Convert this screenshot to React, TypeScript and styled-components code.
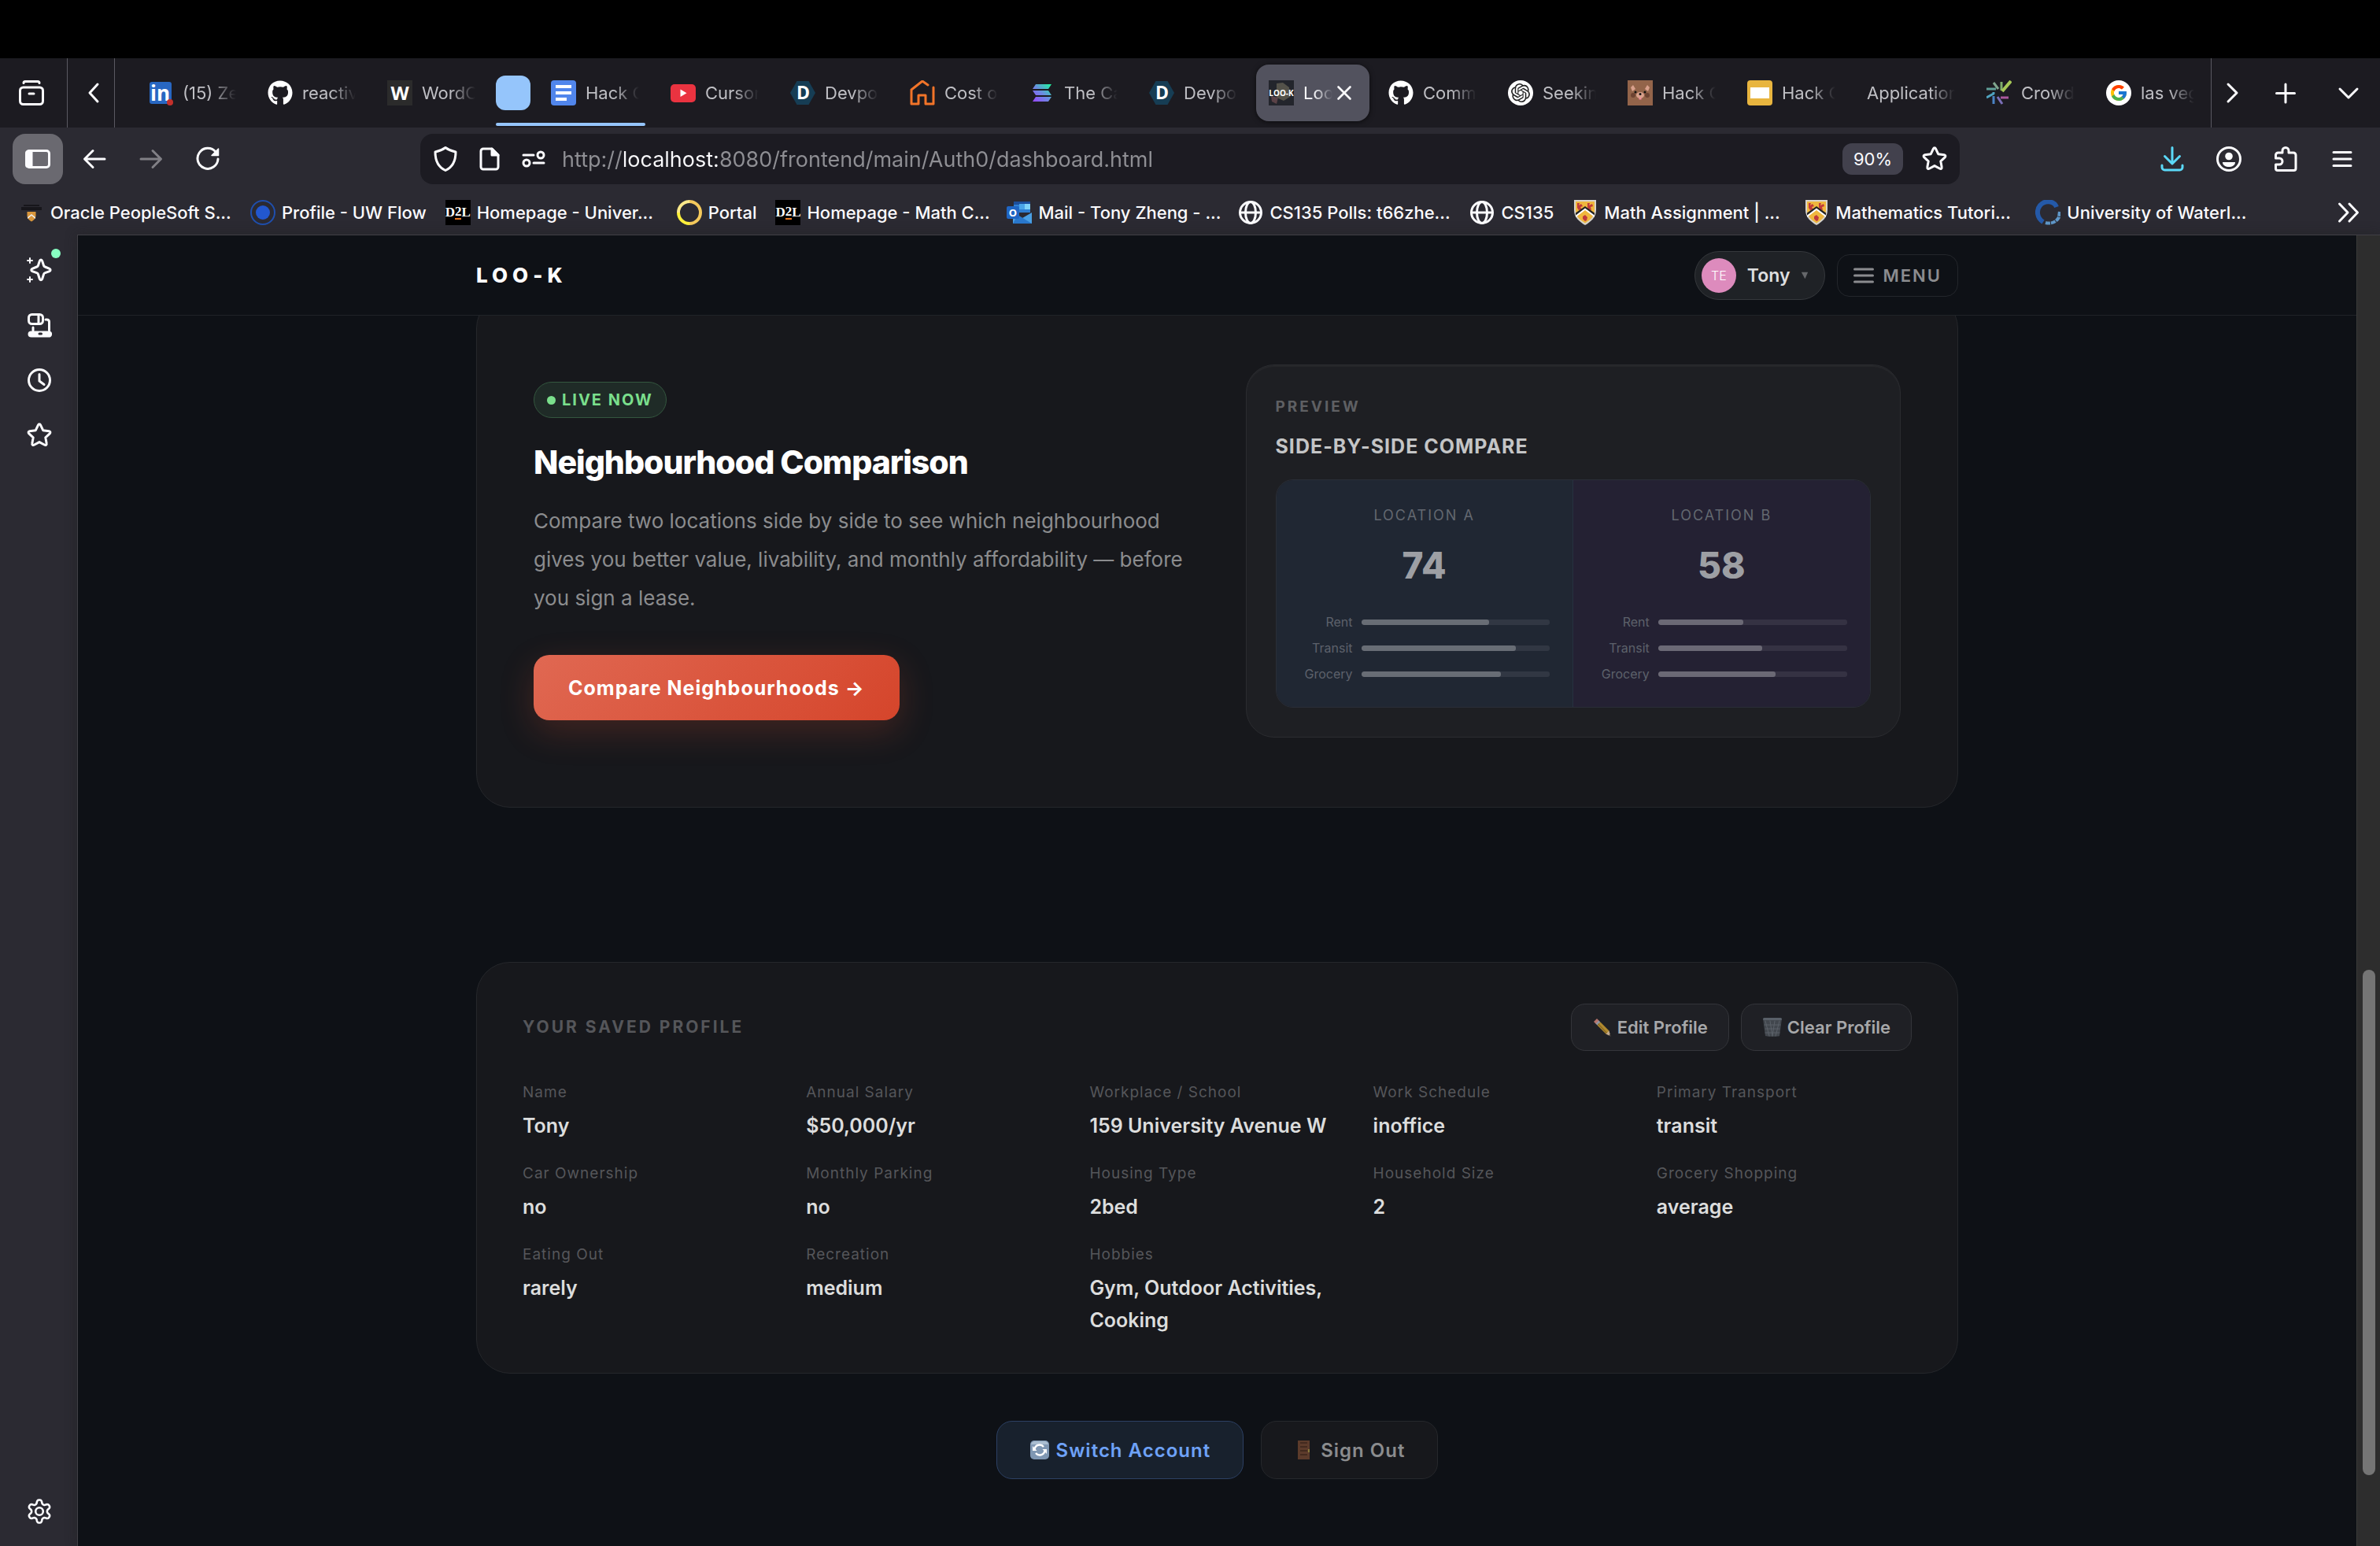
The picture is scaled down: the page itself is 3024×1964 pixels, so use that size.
import React from "react";
import styled, { createGlobalStyle, css } from "styled-components";
import { FaGithub } from "react-icons/fa";
import { FcGoogle } from "react-icons/fc";
import { SiOpenai } from "react-icons/si";

const GlobalStyle = createGlobalStyle`
  *, *::before, *::after { box-sizing: border-box; }
  html, body { margin: 0; padding: 0; background: #000; }
  body { font-family: Inter, "Noto Sans", sans-serif; color: #fbfbfe; }
  button, input { font: inherit; color: inherit; }
  h2, h3, p, dl, dt, dd { margin: 0; }
`;

/* ---------- browser shell ---------- */

const Shell = styled.div`
  display: flex;
  flex-direction: column;
  height: 100vh;
  padding-top: 74px;
  overflow: hidden;
  background: #000;
`;

const bareButton = css`
  display: flex;
  align-items: center;
  justify-content: center;
  flex: none;
  padding: 0;
  border: 0;
  background: none;
  cursor: pointer;
`;

const Icon = styled.svg<{ $size?: number; $flat?: boolean; $butt?: boolean }>`
  display: block;
  flex: none;
  width: ${(p) => p.$size ?? 32}px;
  height: ${(p) => p.$size ?? 32}px;
  fill: none;
  stroke: ${(p) => (p.$flat ? "none" : "currentColor")};
  stroke-width: 3;
  stroke-linecap: ${(p) => (p.$butt ? "butt" : "round")};
  stroke-linejoin: round;
`;

const LogoText = styled.text<{ $size: number }>`
  fill: #fff;
  stroke: none;
  font-family: "Open Sans", sans-serif;
  font-size: ${(p) => p.$size}px;
  font-weight: 700;
  text-anchor: middle;
`;

const TabStrip = styled.div`
  display: flex;
  flex: none;
  height: 88px;
  background: #1c1b21;
`;

const StripButton = styled.button<{ $width: number; $line?: "left" | "right"; $start?: boolean }>`
  ${bareButton}
  width: ${(p) => p.$width}px;
  ${(p) => p.$start && "justify-content: flex-start; padding-left: 24px;"}
  ${(p) => p.$line && `border-${p.$line}: 1px solid #5a5961;`}
`;

const TabList = styled.div`
  display: flex;
  flex: 1;
  min-width: 0;
  align-items: center;
  gap: 8px;
  padding-left: 26px;
  overflow: hidden;
`;

const Tab = styled.div<{ $active?: boolean; $grouped?: boolean }>`
  position: relative;
  display: flex;
  flex: none;
  align-items: center;
  width: 144px;
  height: 72px;
  padding: 0 16px;
  gap: 12px;
  border-radius: 16px;
  ${(p) =>
    p.$active &&
    `background: #52525e; box-shadow: 0 1px 6px rgba(0, 0, 0, 0.6);`}
  ${(p) =>
    p.$grouped &&
    `&::after {
      content: "";
      position: absolute;
      left: -54px;
      right: 8px;
      bottom: -6px;
      height: 4px;
      border-radius: 2px;
      background: #95c5fb;
    }`}
`;

const TabTitle = styled.span<{ $active?: boolean }>`
  flex: 1;
  min-width: 0;
  overflow: hidden;
  white-space: nowrap;
  font-size: 22px;
  line-height: 32px;
  color: ${(p) => (p.$active ? "#fbfbfe" : "#bfbfc4")};
  mask-image: linear-gradient(to right, #000 calc(100% - ${(p) => (p.$active ? 24 : 32)}px), transparent);
`;

const CloseButton = styled.button`
  ${bareButton}
  width: 24px;
  height: 32px;
  margin: 0 4px 0 -9px;
`;

const GroupChip = styled.button`
  ${bareButton}
  width: 44px;
  height: 44px;
  margin: 0 2px;
  border-radius: 12px;
  background: #95c5fb;
`;

const LetterMark = styled.span<{ $serif?: boolean }>`
  display: flex;
  flex: none;
  align-items: center;
  justify-content: center;
  width: 32px;
  height: 32px;
  color: #fff;
  background: ${(p) => (p.$serif ? "#000" : "#2b2b2b")};
  font-family: ${(p) => (p.$serif ? '"Liberation Serif", serif' : '"Open Sans", sans-serif')};
  font-size: ${(p) => (p.$serif ? 17 : 24)}px;
  font-weight: 700;
  line-height: 32px;
`;

const Accent = styled.span`
  border-bottom: 2px solid #e87722;
  line-height: 16px;
`;

const RoundMark = styled.span<{ $color: string }>`
  display: flex;
  flex: none;
  align-items: center;
  justify-content: center;
  width: 32px;
  height: 32px;
  border-radius: 50%;
  background: #fff;
  color: ${(p) => p.$color};
  font-size: 24px;
`;

const BareMark = styled.span`
  display: flex;
  flex: none;
  color: #fff;
  font-size: 32px;
`;

const NavBar = styled.div`
  display: grid;
  flex: none;
  grid-template-columns: 1fr minmax(0, 1956px) 1fr;
  align-items: center;
  height: 80px;
  background: #2b2a32;
`;

const NavGroup = styled.div<{ $end?: boolean }>`
  display: flex;
  gap: 8px;
  padding: 0 16px;
  justify-content: ${(p) => (p.$end ? "flex-end" : "flex-start")};
`;

const NavButton = styled.button<{ $pressed?: boolean; $tone?: string }>`
  ${bareButton}
  width: 64px;
  height: 64px;
  border-radius: 16px;
  color: ${(p) => p.$tone ?? "#fbfbfe"};
  background: ${(p) => (p.$pressed ? "#6a6970" : "none")};
`;

const AddressBar = styled.form`
  display: flex;
  align-items: center;
  gap: 24px;
  height: 64px;
  padding: 0 16px;
  border-radius: 16px;
  background: #1c1b22;
`;

const AddressInput = styled.input`
  flex: 1;
  min-width: 0;
  height: 48px;
  margin-left: -4px;
  padding: 0;
  border: 0;
  outline: 0;
  font-size: 27px;
  background: linear-gradient(to right, #8f8f94 79px, #fbfbfe 79px, #fbfbfe 198px, #8f8f94 198px);
  background-clip: text;
  -webkit-text-fill-color: transparent;
`;

const IconButton = styled.button`
  ${bareButton}
`;

const ZoomPill = styled.button`
  ${bareButton}
  height: 40px;
  width: 77px;
  border-radius: 12px;
  background: #42414d;
  font-size: 22px;
`;

const BookmarkBar = styled.nav`
  display: flex;
  flex: none;
  align-items: center;
  gap: 24px;
  height: 56px;
  padding: 0 24px;
  background: #2b2a32;
`;

const Bookmark = styled.a`
  display: flex;
  flex: none;
  align-items: center;
  gap: 8px;
  color: #fbfbfe;
  text-decoration: none;
`;

const BookmarkLabel = styled.span<{ $full?: boolean }>`
  ${(p) => p.$full && "width: 230px;"}
  white-space: nowrap;
  font-size: 22px;
  line-height: 32px;
  font-weight: 500;
`;

const Overflow = styled.button`
  ${bareButton}
  margin-left: auto;
`;

const Body = styled.div`
  display: flex;
  flex: 1;
  min-height: 0;
  background: #2b2a32;
`;

const SideRail = styled.aside`
  display: flex;
  flex: none;
  flex-direction: column;
  align-items: center;
  width: 98px;
  padding: 13px 0 12px;
  gap: 6px;
`;

const RailButton = styled.button<{ $last?: boolean }>`
  ${bareButton}
  position: relative;
  width: 64px;
  height: 64px;
  margin-left: 2px;
  ${(p) => p.$last && "margin-top: auto;"}
`;

const Notice = styled.i`
  position: absolute;
  top: 5px;
  right: 5px;
  width: 12px;
  height: 12px;
  border-radius: 50%;
  background: #88ffc2;
`;

const Pane = styled.div`
  display: flex;
  flex: 1;
  min-width: 0;
  border-top: 1px solid #414046;
  border-left: 1px solid #414046;
  box-shadow: 0 0 14px rgba(30, 30, 30, 0.45);
  background: #0e1116;
`;

const ScrollTrack = styled.div`
  display: flex;
  flex: none;
  flex-direction: column;
  align-items: center;
  width: 30px;
  border-left: 1px solid #3b3b3b;
  background: #2d2d2d;
`;

const ScrollSpace = styled.div<{ $share: number }>`
  flex: ${(p) => p.$share};
`;

const ScrollThumb = styled.div`
  flex: 642;
  width: 16px;
  border-radius: 8px;
  background: #757575;
`;

/* ---------- page ---------- */

const Page = styled.div`
  display: flex;
  flex: 1;
  min-width: 0;
  flex-direction: column;
`;

const PageHeader = styled.header`
  flex: none;
  border-bottom: 1px solid #202328;
`;

const Container = styled.div`
  width: 100%;
  max-width: 1883px;
  margin: 0 auto;
`;

const HeaderRow = styled(Container)`
  display: flex;
  align-items: center;
  gap: 15px;
  height: 101px;
`;

const Brand = styled.a`
  margin-right: auto;
  color: #fff;
  text-decoration: none;
  font-size: 26px;
  font-weight: 800;
  letter-spacing: 6px;
`;

const UserButton = styled.button`
  ${bareButton}
  justify-content: flex-start;
  gap: 14px;
  height: 62px;
  padding: 0 20px 0 8px;
  border: 1px solid #35383c;
  border-radius: 31px;
  background: #1f2226;
  color: #dddedf;
  font-size: 23px;
  font-weight: 600;
`;

const Avatar = styled.span`
  display: flex;
  align-items: center;
  justify-content: center;
  width: 44px;
  height: 44px;
  border-radius: 50%;
  background: #dd8bbd;
  color: #fff;
  font-size: 16px;
  font-weight: 300;
`;

const MenuButton = styled.button`
  ${bareButton}
  gap: 11px;
  height: 54px;
  padding: 0 20px;
  border: 1px solid #23262b;
  border-radius: 16px;
  color: #8b8c8f;
  font-size: 22px;
  font-weight: 600;
  letter-spacing: 2px;
`;

const Scroller = styled.main`
  flex: 1;
  min-height: 0;
  overflow: hidden;
`;

const Card = styled.section`
  border: 1px solid #25272b;
  border-radius: 43px;
  background: #17181c;
`;

/* The page is scrolled, so the first card starts behind the header. */
const CompareCard = styled(Card)`
  display: grid;
  grid-template-columns: 1fr 1fr;
  align-items: center;
  gap: 72px;
  margin-top: -27px;
  padding: 88px 72px;
`;

const Pitch = styled.div`
  display: flex;
  flex-direction: column;
  align-items: flex-start;
`;

const LiveBadge = styled.span`
  display: flex;
  align-items: center;
  gap: 8px;
  height: 46px;
  padding: 0 16px;
  border: 1px solid #34573f;
  border-radius: 23px;
  background: #1f2b27;
  color: #7adf8c;
  font-size: 20px;
  font-weight: 700;
  letter-spacing: 2px;
`;

const LiveDot = styled.i`
  width: 11px;
  height: 11px;
  border-radius: 50%;
  background: #7adf8c;
`;

const Headline = styled.h2`
  margin-top: 31px;
  color: #fff;
  font-size: 41px;
  line-height: 50px;
  font-weight: 800;
  letter-spacing: -1px;
`;

const Blurb = styled.p`
  margin-top: 25px;
  color: #8b8c8e;
  font-size: 26px;
  line-height: 49px;
`;

const PrimaryButton = styled.button`
  ${bareButton}
  height: 83px;
  margin-top: 48px;
  padding: 0 44px;
  border-radius: 20px;
  color: #fff;
  background: linear-gradient(135deg, #e06852, #d5452b);
  box-shadow: 0 14px 44px rgba(224, 80, 50, 0.22);
  font-size: 25px;
  font-weight: 700;
  letter-spacing: 1px;
`;

const Preview = styled.div`
  padding: 37px;
  border: 1px solid #2b2c30;
  border-radius: 36px;
  background: #1e1f23;
  box-shadow: inset 0 2px 0 rgba(255, 255, 255, 0.03);
`;

const Eyebrow = styled.p`
  color: #5f6063;
  font-size: 19px;
  line-height: 32px;
  font-weight: 700;
  letter-spacing: 3px;
`;

const PreviewTitle = styled.h3`
  margin-top: 16px;
  color: #c4c5c6;
  font-size: 25px;
  line-height: 36px;
  font-weight: 700;
  letter-spacing: 1px;
`;

const Versus = styled.div`
  display: grid;
  grid-template-columns: 1fr 1fr;
  margin-top: 24px;
  border: 1px solid #2a2e37;
  border-radius: 22px;
  overflow: hidden;
`;

const Side = styled.div<{ $second?: boolean }>`
  display: flex;
  flex-direction: column;
  padding: 29px 29px 31px;
  background: ${(p) => (p.$second ? "#242133" : "#202733")};
  ${(p) => !p.$second && "border-right: 1px solid #263240;"}
`;

const SideName = styled.span`
  color: #636870;
  text-align: center;
  font-size: 18px;
  line-height: 32px;
  letter-spacing: 2px;
`;

const Score = styled.strong`
  margin: 17px 0 31px;
  color: #9d9fa4;
  text-align: center;
  font-size: 46px;
  line-height: 60px;
  font-weight: 800;
`;

const Meters = styled.div`
  display: flex;
  flex-direction: column;
  gap: 11px;
`;

const Meter = styled.div`
  display: grid;
  grid-template-columns: 68px 1fr;
  align-items: center;
  gap: 11px;
  color: #5d616b;
  font-size: 16px;
  line-height: 22px;
  text-align: right;
`;

const MeterTrack = styled.div`
  height: 7px;
  border-radius: 3px;
  background: rgba(255, 255, 255, 0.08);
  overflow: hidden;
`;

const MeterFill = styled.div`
  height: 100%;
  border-radius: 3px;
  background: rgba(255, 255, 255, 0.27);
`;

const ProfileCard = styled(Card)`
  margin-top: 196px;
  padding: 52px 58px 46px;
`;

const ProfileHead = styled.div`
  display: flex;
  align-items: center;
  gap: 15px;
`;

const ProfileTitle = styled.h3`
  margin-right: auto;
  color: #55565a;
  font-size: 21px;
  line-height: 32px;
  font-weight: 700;
  letter-spacing: 3px;
`;

const SmallButton = styled.button`
  ${bareButton}
  gap: 6px;
  height: 60px;
  padding: 0 26px;
  border: 1px solid #34353a;
  border-radius: 18px;
  background: #1f2025;
  color: #a7a8aa;
  font-size: 22px;
  font-weight: 600;
`;

const Facts = styled.dl`
  display: grid;
  grid-template-columns: repeat(5, 1fr);
  gap: 24px 36px;
  margin-top: 37px;
`;

const FactName = styled.dt`
  margin-bottom: 6px;
  color: #55565a;
  font-size: 19px;
  line-height: 32px;
  letter-spacing: 1px;
`;

const FactValue = styled.dd`
  color: #dcdddd;
  font-size: 25px;
  line-height: 41px;
  font-weight: 600;
`;

const Actions = styled.div`
  display: flex;
  justify-content: center;
  gap: 22px;
  margin-top: 60px;
`;

const ActionButton = styled.button<{ $accent?: boolean }>`
  ${bareButton}
  gap: 8px;
  height: 74px;
  padding: 0 41px;
  border: 1px solid ${(p) => (p.$accent ? "#2c4063" : "#26282c")};
  border-radius: 20px;
  background: ${(p) => (p.$accent ? "#18212d" : "#17181c")};
  color: ${(p) => (p.$accent ? "#6ea2f7" : "#8b8c8e")};
  font-size: 24px;
  font-weight: 600;
  letter-spacing: 1px;
`;

/* ---------- drawings ---------- */

const LinkedInMark = () => (
  <Icon viewBox="0 0 32 32" $flat>
    <rect x="2" y="2" width="28" height="28" rx="3" fill="#2867c2" />
    <LogoText x="15.5" y="26" $size={26}>in</LogoText>
    <circle cx="28" cy="28" r="4" fill="#c4302b" />
  </Icon>
);

const DocsMark = () => (
  <Icon viewBox="0 0 32 32" $flat>
    <rect width="32" height="32" rx="4" fill="#5186ec" />
    <path d="M6 6h20v4H6zM6 14h20v4H6zM6 22h14v4H6z" fill="#fff" />
  </Icon>
);

const SlidesMark = () => (
  <Icon viewBox="0 0 32 32" $flat>
    <rect width="32" height="32" rx="4" fill="#e8b53f" />
    <path d="M4 9h24v14H4z" fill="#fff" />
  </Icon>
);

const YouTubeMark = () => (
  <Icon viewBox="0 0 32 32" $flat>
    <rect y="5" width="32" height="23" rx="5" fill="#ea3340" />
    <path d="M12.5 11.5v9.500l8-4.700z" fill="#fff" />
  </Icon>
);

const DevpostMark = () => (
  <Icon viewBox="0 0 32 32" $flat>
    <path d="M8.500 1h15L32 16l-8.500 15h-15L0 16z" fill="#163d54" />
    <LogoText x="16.5" y="24" $size={23}>D</LogoText>
  </Icon>
);

const HouseMark = () => (
  <Icon viewBox="0 0 32 32" stroke="#f27429">
    <g stroke="#f27429">
      <path d="M23 6l-7-5L2 12v18h9V19h9v11h10V9" />
    </g>
  </Icon>
);

const SolanaMark = () => (
  <Icon viewBox="0 0 32 32" $flat>
    <defs>
      <linearGradient id="sol" x1="0" y1="1" x2="1" y2="0">
        <stop offset="0" stopColor="#9945ff" />
        <stop offset="0.5" stopColor="#6a8ce0" />
        <stop offset="1" stopColor="#19fb9b" />
      </linearGradient>
    </defs>
    <path d="M8 5h20l-4 6H4zM4 13h20l4 6H8zM8 21h20l-4 6H4z" fill="url(#sol)" />
  </Icon>
);

const LookMark = () => (
  <Icon viewBox="0 0 32 32" $flat>
    <rect width="32" height="32" fill="#23252c" />
    <path d="M10 4l8-1 8 6 1 12-8 5-9-4z" fill="#54524a" />
    <path d="M3 20l9 2-2 8-6-3z" fill="#5a4247" />
    <LogoText x="16" y="20" $size={10}>LOO-K</LogoText>
  </Icon>
);

const BearMark = () => (
  <Icon viewBox="0 0 32 32" $flat>
    <rect width="32" height="32" fill="#93644a" />
    <path d="M4 9l3-3 3 5-4 3zM28 9l-3-3-3 5 4 3z" fill="#d9a08c" />
    <circle cx="7" cy="19" r="3" fill="#6d4332" />
    <circle cx="25" cy="19" r="3" fill="#6d4332" />
    <ellipse cx="16" cy="19" rx="5" ry="4" fill="#d9a08c" />
    <circle cx="10" cy="15" r="1.5" fill="#111" />
    <circle cx="22" cy="15" r="1.5" fill="#111" />
    <circle cx="16" cy="17.5" r="1.5" fill="#111" />
    <path d="M14.5 22h3v2.500h-3z" fill="#f08c9c" />
  </Icon>
);

const CrowdMark = () => (
  <Icon viewBox="0 0 32 32" $butt>
    <path d="M19 13V2" stroke="#7fae6a" />
    <path d="M20 14L31 1" stroke="#a7c957" strokeWidth="4" />
    <path d="M15 11L9 3" stroke="#7fa58d" />
    <path d="M12 11H0" stroke="#5f9f97" />
    <path d="M0 22l9-5v-2" stroke="#4fa3bf" />
    <path d="M9 20v10" stroke="#4a83c4" />
    <path d="M14 21l6 9" stroke="#7b6fb8" />
    <path d="M18 22h10" stroke="#a9589c" />
  </Icon>
);

const OracleMark = () => (
  <Icon viewBox="0 0 32 32" $flat>
    <path d="M3 9h26v4H3zM6 6h20v2H6z" fill="#17161b" />
    <path d="M10.500 15h11v5c0 3-2.500 6-5.500 7.500-3-1.500-5.500-4.500-5.500-7.500z" fill="#d9963c" />
    <path d="M11 22l5-4 5 4v2l-5-4-5 4z" fill="#eee" />
  </Icon>
);

const FlowMark = () => (
  <Icon viewBox="0 0 32 32">
    <circle cx="16" cy="16" r="15" stroke="#1f4fae" strokeWidth="2" />
    <circle cx="16" cy="16" r="9" fill="#2257cf" stroke="none" />
  </Icon>
);

const PortalMark = () => (
  <Icon viewBox="0 0 32 32" $butt>
    <g strokeWidth="4">
      <path d="M16 2a14 14 0 0 1 0 28" stroke="#f4c95c" />
      <path d="M16 30a14 14 0 0 1-14-14" stroke="#fdf03c" />
      <path d="M2 16A14 14 0 0 1 16 2" stroke="#fbe98a" />
    </g>
  </Icon>
);

const OutlookMark = () => (
  <Icon viewBox="0 0 32 32" $flat>
    <path d="M9 2h21v14H9z" fill="#2f7fd3" />
    <path d="M9 2h21v4H9z" fill="#1c4f9c" />
    <path d="M23 5h7v7h-7z" fill="#7fd3f7" />
    <path d="M16 5h7v7h-7z" fill="#4aa5e8" />
    <path d="M8 16l12 7 12-7v14H8z" fill="#4aa0e4" />
    <path d="M14 19l18 11H8z" fill="#2a78cc" />
    <rect y="8" width="16" height="16" rx="2" fill="#1f66c4" />
    <LogoText x="8" y="21" $size={13}>O</LogoText>
  </Icon>
);

const GlobeMark = () => (
  <Icon viewBox="0 0 32 32">
    <circle cx="16" cy="16" r="13.5" />
    <ellipse cx="16" cy="16" rx="6.5" ry="13.5" />
    <path d="M3 16h26" />
  </Icon>
);

const CrestMark = () => (
  <Icon viewBox="0 0 32 32" $flat>
    <path d="M2 0h28v13c0 9-7 15-14 19C9 28 2 22 2 13z" fill="#d8d4cc" />
    <path d="M4 2h24v11c0 8-6 13-12 16.500C10 26 4 21 4 13z" fill="#efb73e" />
    <path d="M6 4h3l-1 3 3-2 2 3-3 1 2 3-4 1-2-3zM19 4h3l-1 3 4-2 1 3-3 1 1 4-4-1-1-3zM13 21l3-2 3 3-1 4-2 1-3-3z" fill="#c03a3c" />
    <path d="M4 18L16 9l12 9v4l-12-9-12 9z" fill="#fff" />
    <path d="M4 19.500L16 10.500l12 9v-3L16 8 4 16.500z" fill="#222" />
  </Icon>
);

const WaterlooMark = () => (
  <Icon viewBox="0 0 32 32" $butt>
    <path d="M27 9C24 1 12 0 6 7c-5 6-4 16 4 21" stroke="#2459a8" strokeWidth="6" />
    <path d="M13 29c7 2 14-1 17-7l1-8" stroke="#5f97c8" strokeWidth="4" strokeDasharray="6 1" />
  </Icon>
);

const ArchiveIcon = () => (
  <Icon viewBox="0 0 32 32">
    <path d="M6 3.500C6 2 7 1.500 8 1.500h16c1 0 2 .5 2 2" />
    <rect x="1.5" y="9" width="29" height="21.5" rx="4" />
    <path d="M13 17h6" />
  </Icon>
);

const Chevron = ({ to }: { to: "left" | "right" | "down" }) => (
  <Icon viewBox="0 0 32 32">
    <path
      d={to === "left" ? "M24 5L14 16l10 11" : to === "right" ? "M10 5l11 11-11 11" : "M5 11l11 11 11-11"}
    />
  </Icon>
);

const PlusIcon = () => (
  <Icon viewBox="0 0 32 32">
    <path d="M16 5v23M4.500 16.500h23" />
  </Icon>
);

const CloseIcon = () => (
  <Icon viewBox="0 0 24 24" $size={24}>
    <path d="M4.500 4.500l15 15M19.500 4.500l-15 15" strokeWidth="2.6" />
  </Icon>
);

const PanelIcon = () => (
  <Icon viewBox="0 0 32 32">
    <rect x="1.5" y="5.5" width="29" height="21" rx="3.5" />
    <path d="M2 7h6v18H2z" fill="currentColor" />
  </Icon>
);

const ArrowIcon = ({ right }: { right?: boolean }) => (
  <Icon viewBox="0 0 32 32">
    <path d={right ? "M3 16h25M18 5.500L28.500 16 18 26.500" : "M29 16H4M14 5.500L3.500 16 14 26.500"} />
  </Icon>
);

const ReloadIcon = () => (
  <Icon viewBox="0 0 32 32">
    <path d="M26 7a13 13 0 1 0 3 9" />
    <path d="M29.500 3v8.500H21z" fill="currentColor" strokeWidth="1.5" />
  </Icon>
);

const ShieldIcon = () => (
  <Icon viewBox="0 0 32 32">
    <path d="M16 1.500c4 3 8 4.500 13 5.500 0 10-3 19-13 23.500C6 26 3 17 3 7c5-1 9-2.500 13-5.500z" />
  </Icon>
);

const FileIcon = () => (
  <Icon viewBox="0 0 32 32">
    <path d="M8 3h11l8 8v15a3 3 0 0 1-3 3H8a3 3 0 0 1-3-3V6a3 3 0 0 1 3-3z" />
    <path d="M19 3v8h8z" fill="currentColor" />
  </Icon>
);

const TogglesIcon = () => (
  <Icon viewBox="0 0 32 32">
    <path d="M3 11h13M16 21h13" />
    <circle cx="25" cy="11" r="4" />
    <circle cx="7" cy="21" r="4" />
  </Icon>
);

const StarIcon = () => (
  <Icon viewBox="0 0 32 32">
    <path d="M14.500 2.800c.6-1.300 2.400-1.300 3 0l3.200 6.900 7.700 1c1.400.2 2 1.900 1 2.900l-5.600 5.200 1.400 7.700c.3 1.400-1.200 2.500-2.400 1.800L16 24.600l-6.800 3.700c-1.200.7-2.700-.4-2.400-1.800l1.400-7.700-5.600-5.200c-1-1-.4-2.700 1-2.900l7.700-1z" />
  </Icon>
);

const DownloadIcon = () => (
  <Icon viewBox="0 0 32 32">
    <path d="M16 1.500v20M6.500 12.500L16 22l9.500-9.500M3 24v2.500a3.500 3.500 0 0 0 3.500 3.500h19a3.500 3.500 0 0 0 3.500-3.500V24" />
  </Icon>
);

const AccountIcon = () => (
  <Icon viewBox="0 0 32 32">
    <circle cx="16" cy="16" r="14.5" />
    <circle cx="16" cy="12.5" r="4.8" fill="currentColor" stroke="none" />
    <path d="M8 20h16c0 4-4 6-8 6s-8-2-8-6z" fill="currentColor" stroke="none" />
  </Icon>
);

const PuzzleIcon = () => (
  <Icon viewBox="0 0 32 32">
    <path d="M12 8V5.500a4 4 0 0 1 8 0V8h6a3 3 0 0 1 3 3v17a2.500 2.500 0 0 1-2.500 2.500H6A2.500 2.500 0 0 1 3.500 28v-5H8a4 4 0 0 0 0-8H3.500v-4a3 3 0 0 1 3-3z" />
  </Icon>
);

const BarsIcon = () => (
  <Icon viewBox="0 0 32 32">
    <path d="M5 7.500h22M5 16h22M5 24.500h22" />
  </Icon>
);

const DoubleChevron = () => (
  <Icon viewBox="0 0 32 32">
    <path d="M4.500 5L15 16 4.500 27M17 5l10.500 11L17 27" />
  </Icon>
);

const SparkleIcon = () => (
  <Icon viewBox="0 0 32 32">
    <path d="M18 3c1 0 1.400.7 1.700 1.600l1.800 5.600c.3 1 .9 1.500 1.800 1.800l5.600 2.300c1.600.7 1.600 2.700 0 3.300l-5.600 2.100c-.9.3-1.500.9-1.800 1.800l-1.800 5.700c-.6 1.900-2.800 1.900-3.400 0l-1.800-5.700c-.3-.9-.9-1.500-1.800-1.800L7 17.600c-1.600-.6-1.600-2.600 0-3.300l5.700-2.300c.9-.3 1.500-.8 1.800-1.800l1.800-5.600C16.600 3.700 17 3 18 3z" />
    <path d="M4 1v6M1 4h6M4 25v6M1 28h6" strokeWidth="2" />
  </Icon>
);

const DevicesIcon = () => (
  <Icon viewBox="0 0 32 32">
    <rect x="2.5" y="2.5" width="18" height="12" rx="4" />
    <path d="M15 3v11M24 9h1.500c2 0 3 1 3 3v11M8 19v4" />
    <path d="M6 25h22c4 0 3 5 0 5H6c-4 0-4-5 0-5z" fill="currentColor" />
    <path d="M16 27h2.500" stroke="#2b2a32" />
  </Icon>
);

const ClockIcon = () => (
  <Icon viewBox="0 0 32 32">
    <circle cx="16" cy="16" r="13.5" />
    <path d="M16 8.500V17l6 4.500" />
  </Icon>
);

/* Six rounded teeth, one at the top. */
const gearOutline =
  Array.from({ length: 120 }, (_, i) => {
    const a = (i / 120) * Math.PI * 2;
    const r = 12.2 + 2.3 * Math.tanh(1.6 * Math.cos(6 * a)) / Math.tanh(1.6);
    return `${i ? "L" : "M"}${(16 + r * Math.sin(a)).toFixed(2)} ${(16 - r * Math.cos(a)).toFixed(2)}`;
  }).join("") + "z";

const GearIcon = () => (
  <Icon viewBox="0 0 32 32">
    <path d={gearOutline} strokeWidth="2.6" />
    <circle cx="16" cy="16" r="4.8" strokeWidth="2.6" />
  </Icon>
);

const MenuLines = () => (
  <Icon viewBox="0 0 26 26" $size={26}>
    <path d="M1.500 5h23M1.500 13h23M1.500 21h23" />
  </Icon>
);

const CaretIcon = () => (
  <Icon viewBox="0 0 12 12" $size={10}>
    <path d="M1 1h10L6.500 11z" fill="#66686b" stroke="none" />
  </Icon>
);

const PencilIcon = () => (
  <Icon viewBox="0 0 26 26" $size={26} $flat>
    <path d="M2 6l4-4 3 3-4 4z" fill="#b5736b" />
    <path d="M4.500 8.500l4-4 2 2-4 4z" fill="#8d96a3" />
    <path d="M6.500 10.500l4-4 11 11-1 5-3-1z" fill="#b0892f" />
    <path d="M8 9l11 12" stroke="#8a6a22" strokeWidth="1.5" />
    <path d="M17.500 21.500l4-4 2 7z" fill="#c2a98c" />
    <path d="M21.500 23l1.500-1 .8 2.800z" fill="#222" />
  </Icon>
);

const TrashIcon = () => (
  <Icon viewBox="0 0 26 26" $size={26} $flat>
    <path d="M1 2h24l-3 22c0 1-18 1-18 0z" fill="#42474e" />
    <path d="M4 5l5 19M10 5l3 19M16 5l-3 19M22 5l-5 19M3 10h20M4 15h18M4 20h18" stroke="#5b6169" strokeWidth="1" />
    <rect x="1" y="1" width="24" height="3" rx="1.5" fill="#596069" />
  </Icon>
);

const SwitchIcon = () => (
  <Icon viewBox="0 0 26 26" $size={26} $butt>
    <rect x="1" y="1" width="24" height="24" rx="5" fill="#7f97b3" stroke="none" />
    <path d="M2 6a5 5 0 0 1 4-4h14a5 5 0 0 1 4 4z" fill="#aabdd0" stroke="none" />
    <path d="M6.500 12a6.500 6.500 0 0 1 11.500-3M19.500 14A6.500 6.500 0 0 1 8 17" stroke="#fff" strokeWidth="2.4" />
    <path d="M4 8v6h5.500zM22 18v-6h-5.500z" fill="#fff" stroke="none" />
  </Icon>
);

const DoorIcon = () => (
  <Icon viewBox="0 0 26 26" $size={26} $flat>
    <rect x="5" y="1" width="15" height="24" fill="#5c3b2b" />
    <path d="M8 4h9M8 9h9M8 14h9M8 19h9" stroke="#432a1f" strokeWidth="2" strokeLinecap="butt" />
    <path d="M18 12h2v4h-2z" fill="#8a7a3a" />
  </Icon>
);

/* ---------- data ---------- */

type TabItem = { title: string; mark?: React.ReactNode; active?: boolean; grouped?: boolean };

const github = <BareMark><FaGithub /></BareMark>;

const leadingTabs: TabItem[] = [
  { title: "(15) Ze", mark: <LinkedInMark /> },
  { title: "reactiv", mark: github },
  { title: "WordC", mark: <LetterMark>W</LetterMark> },
];

const tabs: TabItem[] = [
  { title: "Hack C", mark: <DocsMark />, grouped: true },
  { title: "Cursor", mark: <YouTubeMark /> },
  { title: "Devpo", mark: <DevpostMark /> },
  { title: "Cost o", mark: <HouseMark /> },
  { title: "The Ca", mark: <SolanaMark /> },
  { title: "Devpo", mark: <DevpostMark /> },
  { title: "Loo", mark: <LookMark />, active: true },
  { title: "Comm", mark: github },
  { title: "Seekin", mark: <RoundMark $color="#222"><SiOpenai /></RoundMark> },
  { title: "Hack C", mark: <BearMark /> },
  { title: "Hack C", mark: <SlidesMark /> },
  { title: "Application" },
  { title: "Crowd", mark: <CrowdMark /> },
  { title: "las veg", mark: <RoundMark $color="#222"><FcGoogle /></RoundMark> },
];

const d2l = <LetterMark $serif>D<Accent>2</Accent>L</LetterMark>;

const bookmarks = [
  { label: "Oracle PeopleSoft S...", mark: <OracleMark />, full: true },
  { label: "Profile - UW Flow", mark: <FlowMark /> },
  { label: "Homepage - Univer...", mark: d2l, full: true },
  { label: "Portal", mark: <PortalMark /> },
  { label: "Homepage - Math C...", mark: d2l, full: true },
  { label: "Mail - Tony Zheng - ...", mark: <OutlookMark />, full: true },
  { label: "CS135 Polls: t66zhe...", mark: <GlobeMark />, full: true },
  { label: "CS135", mark: <GlobeMark /> },
  { label: "Math Assignment | ...", mark: <CrestMark />, full: true },
  { label: "Mathematics Tutori...", mark: <CrestMark />, full: true },
  { label: "University of Waterl...", mark: <WaterlooMark />, full: true },
];

const locations = [
  { name: "LOCATION A", score: 74, meters: [["Rent", 68], ["Transit", 82], ["Grocery", 74]] as [string, number][] },
  { name: "LOCATION B", score: 58, meters: [["Rent", 45], ["Transit", 55], ["Grocery", 62]] as [string, number][] },
];

const facts: [string, string][] = [
  ["Name", "Tony"],
  ["Annual Salary", "$50,000/yr"],
  ["Workplace / School", "159 University Avenue W"],
  ["Work Schedule", "inoffice"],
  ["Primary Transport", "transit"],
  ["Car Ownership", "no"],
  ["Monthly Parking", "no"],
  ["Housing Type", "2bed"],
  ["Household Size", "2"],
  ["Grocery Shopping", "average"],
  ["Eating Out", "rarely"],
  ["Recreation", "medium"],
  ["Hobbies", "Gym, Outdoor Activities, Cooking"],
];

const BrowserTab = ({ title, mark, active, grouped }: TabItem) => (
  <Tab $active={active} $grouped={grouped}>
    {mark}
    <TabTitle $active={active}>{title}</TabTitle>
    {active && (
      <CloseButton type="button" aria-label="Close tab">
        <CloseIcon />
      </CloseButton>
    )}
  </Tab>
);

export default function App() {
  return (
    <>
      <GlobalStyle />
      <Shell>
        <TabStrip>
          <StripButton $width={86} $line="right" $start aria-label="Recent browsing"><ArchiveIcon /></StripButton>
          <StripButton $width={60} $line="right" aria-label="Scroll tabs left"><Chevron to="left" /></StripButton>
          <TabList>
            {leadingTabs.map((t) => <BrowserTab key={t.title} {...t} />)}
            <GroupChip type="button" aria-label="Tab group" />
            {tabs.map((t, i) => <BrowserTab key={i} {...t} />)}
          </TabList>
          <StripButton $width={55} $line="left" aria-label="Scroll tabs right"><Chevron to="right" /></StripButton>
          <StripButton $width={80} aria-label="New tab"><PlusIcon /></StripButton>
          <StripButton $width={80} aria-label="List all tabs"><Chevron to="down" /></StripButton>
        </TabStrip>

        <NavBar>
          <NavGroup>
            <NavButton $pressed aria-label="Sidebars"><PanelIcon /></NavButton>
            <NavButton aria-label="Back"><ArrowIcon /></NavButton>
            <NavButton $tone="#818086" aria-label="Forward"><ArrowIcon right /></NavButton>
            <NavButton aria-label="Reload"><ReloadIcon /></NavButton>
          </NavGroup>
          <AddressBar onSubmit={(e) => e.preventDefault()}>
            <IconButton type="button" aria-label="Tracking protection"><ShieldIcon /></IconButton>
            <IconButton type="button" aria-label="Site information"><FileIcon /></IconButton>
            <IconButton type="button" aria-label="Permissions"><TogglesIcon /></IconButton>
            <AddressInput
              aria-label="Address"
              defaultValue="http://localhost:8080/frontend/main/Auth0/dashboard.html"
            />
            <ZoomPill type="button">90%</ZoomPill>
            <IconButton type="button" aria-label="Bookmark this page"><StarIcon /></IconButton>
          </AddressBar>
          <NavGroup $end>
            <NavButton $tone="#5bd9f8" aria-label="Downloads"><DownloadIcon /></NavButton>
            <NavButton aria-label="Account"><AccountIcon /></NavButton>
            <NavButton aria-label="Extensions"><PuzzleIcon /></NavButton>
            <NavButton aria-label="Application menu"><BarsIcon /></NavButton>
          </NavGroup>
        </NavBar>

        <BookmarkBar>
          {bookmarks.map((b) => (
            <Bookmark key={b.label} href="#">
              {b.mark}
              <BookmarkLabel $full={b.full}>{b.label}</BookmarkLabel>
            </Bookmark>
          ))}
          <Overflow aria-label="More bookmarks"><DoubleChevron /></Overflow>
        </BookmarkBar>

        <Body>
          <SideRail>
            <RailButton aria-label="AI chatbot"><SparkleIcon /><Notice /></RailButton>
            <RailButton aria-label="Synced tabs"><DevicesIcon /></RailButton>
            <RailButton aria-label="History"><ClockIcon /></RailButton>
            <RailButton aria-label="Bookmarks"><StarIcon /></RailButton>
            <RailButton $last aria-label="Customize sidebar"><GearIcon /></RailButton>
          </SideRail>

          <Pane>
            <Page>
              <PageHeader>
                <HeaderRow>
                  <Brand href="#">LOO-K</Brand>
                  <UserButton>
                    <Avatar>TE</Avatar>
                    Tony
                    <CaretIcon />
                  </UserButton>
                  <MenuButton><MenuLines />MENU</MenuButton>
                </HeaderRow>
              </PageHeader>

              <Scroller>
                <Container>
                  <CompareCard>
                    <Pitch>
                      <LiveBadge><LiveDot />LIVE NOW</LiveBadge>
                      <Headline>Neighbourhood Comparison</Headline>
                      <Blurb>
                        Compare two locations side by side to see which neighbourhood gives you better
                        value, livability, and monthly affordability — before you sign a lease.
                      </Blurb>
                      <PrimaryButton>Compare Neighbourhoods →</PrimaryButton>
                    </Pitch>
                    <Preview>
                      <Eyebrow>PREVIEW</Eyebrow>
                      <PreviewTitle>SIDE-BY-SIDE COMPARE</PreviewTitle>
                      <Versus>
                        {locations.map((l, i) => (
                          <Side key={l.name} $second={i === 1}>
                            <SideName>{l.name}</SideName>
                            <Score>{l.score}</Score>
                            <Meters>
                              {l.meters.map(([label, value]) => (
                                <Meter key={label}>
                                  <span>{label}</span>
                                  <MeterTrack><MeterFill style={{ width: `${value}%` }} /></MeterTrack>
                                </Meter>
                              ))}
                            </Meters>
                          </Side>
                        ))}
                      </Versus>
                    </Preview>
                  </CompareCard>

                  <ProfileCard>
                    <ProfileHead>
                      <ProfileTitle>YOUR SAVED PROFILE</ProfileTitle>
                      <SmallButton><PencilIcon />Edit Profile</SmallButton>
                      <SmallButton><TrashIcon />Clear Profile</SmallButton>
                    </ProfileHead>
                    <Facts>
                      {facts.map(([name, value]) => (
                        <div key={name}>
                          <FactName>{name}</FactName>
                          <FactValue>{value}</FactValue>
                        </div>
                      ))}
                    </Facts>
                  </ProfileCard>

                  <Actions>
                    <ActionButton $accent><SwitchIcon />Switch Account</ActionButton>
                    <ActionButton><DoorIcon />Sign Out</ActionButton>
                  </Actions>
                </Container>
              </Scroller>
            </Page>
            <ScrollTrack>
              <ScrollSpace $share={933} />
              <ScrollThumb />
              <ScrollSpace $share={90} />
            </ScrollTrack>
          </Pane>
        </Body>
      </Shell>
    </>
  );
}
